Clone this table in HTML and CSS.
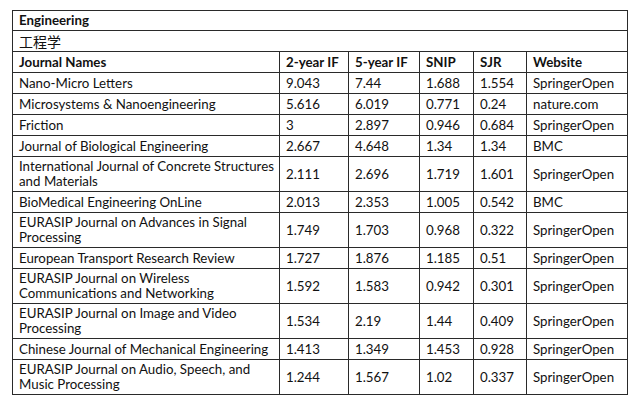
FILE: index.html
```html
<!DOCTYPE html>
<html>
<head>
<meta charset="utf-8">
<link rel="stylesheet" href="styles.css">
</head>
<body>
<table class="grid">
  <colgroup>
    <col class="c-name">
    <col class="c-if2">
    <col class="c-if5">
    <col class="c-snip">
    <col class="c-sjr">
    <col class="c-web">
  </colgroup>
  <tbody>
    <tr class="top"><td class="title" colspan="6">Engineering</td></tr>
    <tr><td class="cn" colspan="6">工程学</td></tr>
    <tr class="head"><td>Journal Names</td><td>2-year IF</td><td>5-year IF</td><td>SNIP</td><td>SJR</td><td>Website</td></tr>
    <tr><td>Nano-Micro Letters</td><td>9.043</td><td>7.44</td><td>1.688</td><td>1.554</td><td>SpringerOpen</td></tr>
    <tr><td>Microsystems &amp; Nanoengineering</td><td>5.616</td><td>6.019</td><td>0.771</td><td>0.24</td><td>nature.com</td></tr>
    <tr><td>Friction</td><td>3</td><td>2.897</td><td>0.946</td><td>0.684</td><td>SpringerOpen</td></tr>
    <tr><td>Journal of Biological Engineering</td><td>2.667</td><td>4.648</td><td>1.34</td><td>1.34</td><td>BMC</td></tr>
    <tr><td>International Journal of Concrete Structures and Materials</td><td>2.111</td><td>2.696</td><td>1.719</td><td>1.601</td><td>SpringerOpen</td></tr>
    <tr><td>BioMedical Engineering OnLine</td><td>2.013</td><td>2.353</td><td>1.005</td><td>0.542</td><td>BMC</td></tr>
    <tr><td>EURASIP Journal on Advances in Signal Processing</td><td>1.749</td><td>1.703</td><td>0.968</td><td>0.322</td><td>SpringerOpen</td></tr>
    <tr><td>European Transport Research Review</td><td>1.727</td><td>1.876</td><td>1.185</td><td>0.51</td><td>SpringerOpen</td></tr>
    <tr><td>EURASIP Journal on Wireless Communications and Networking</td><td>1.592</td><td>1.583</td><td>0.942</td><td>0.301</td><td>SpringerOpen</td></tr>
    <tr><td>EURASIP Journal on Image and Video Processing</td><td>1.534</td><td>2.19</td><td>1.44</td><td>0.409</td><td>SpringerOpen</td></tr>
    <tr><td>Chinese Journal of Mechanical Engineering</td><td>1.413</td><td>1.349</td><td>1.453</td><td>0.928</td><td>SpringerOpen</td></tr>
    <tr><td>EURASIP Journal on Audio, Speech, and Music Processing</td><td>1.244</td><td>1.567</td><td>1.02</td><td>0.337</td><td>SpringerOpen</td></tr>
  </tbody>
</table>
</body>
</html>
```

FILE: styles.css
```css
html, body {
  margin: 0;
  padding: 0;
  background: #ffffff;
}
body {
  padding: 10px 0 0 12px;
  font-family: "Lato", "Noto Sans CJK SC", sans-serif;
  font-size: 13.3px;
  color: #111111;
}
.grid {
  border-collapse: collapse;
  table-layout: fixed;
  width: 615px;
}
.c-name { width: 267px; }
.c-if2 { width: 69px; }
.c-if5 { width: 71px; }
.c-snip { width: 54px; }
.c-sjr { width: 53px; }
.c-web { width: 101px; }
.grid tr {
  height: 21px;
}
.grid tr.top {
  height: 20px;
}
.grid td {
  border: 1px solid #2a2a2a;
  padding: 2px 3px 2px 6px;
  line-height: 15px;
  vertical-align: middle;
  text-align: left;
  white-space: normal;
}
.grid td.title {
  font-weight: 700;
}
.grid td.cn {
  font-family: "Noto Sans CJK SC", sans-serif;
  font-size: 14px;
}
.head td {
  font-weight: 700;
}
```
